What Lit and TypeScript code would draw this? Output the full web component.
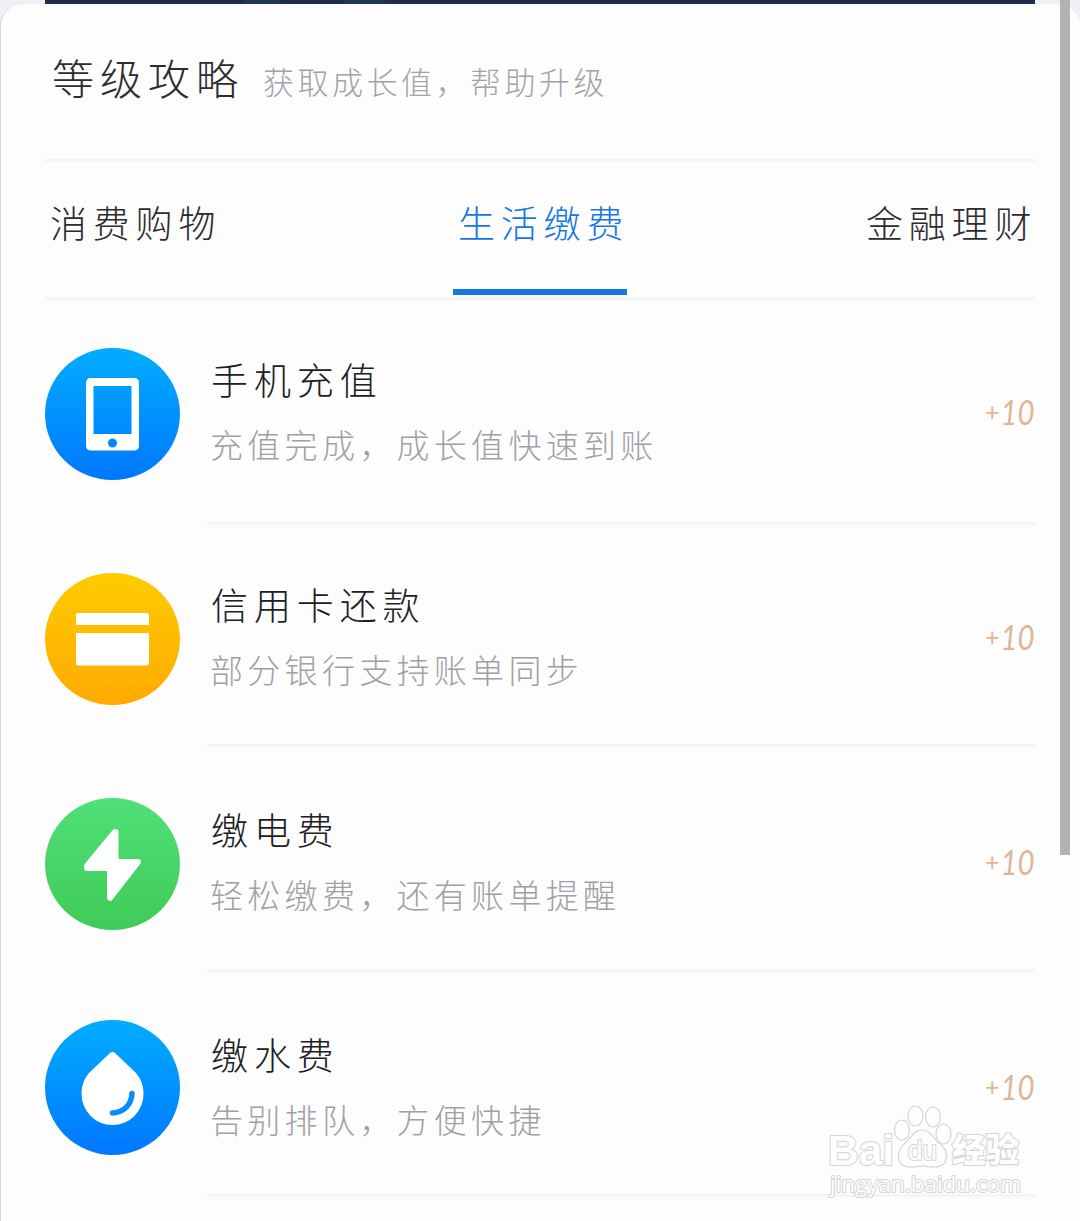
import { LitElement, html, css, svg } from "lit";
import { customElement, property, state } from "lit/decorators.js";

type IconName = "phone" | "card" | "bolt" | "drop";

interface Task {
  icon: IconName;
  title: string;
  desc: string;
  points: string;
}

const TASKS: Task[] = [
  { icon: "phone", title: "手机充值", desc: "充值完成，成长值快速到账", points: "10" },
  { icon: "card", title: "信用卡还款", desc: "部分银行支持账单同步", points: "10" },
  { icon: "bolt", title: "缴电费", desc: "轻松缴费，还有账单提醒", points: "10" },
  { icon: "drop", title: "缴水费", desc: "告别排队，方便快捷", points: "10" },
];

const GRADIENTS: Record<IconName, [string, string]> = {
  phone: ["#00adff", "#0077ff"],
  card: ["#ffcb00", "#ffaa00"],
  bolt: ["#50e078", "#40cb58"],
  drop: ["#00adff", "#0077ff"],
};

@customElement("task-icon")
export class TaskIcon extends LitElement {
  @property() name: IconName = "phone";

  static styles = css`
    :host { display: block; width: 135px; height: 132px; }
    :host([name="drop"]) { height: 135px; }
    .icon { display: block; width: 100%; height: 100%; }
  `;

  private glyph() {
    switch (this.name) {
      case "phone":
        return svg`
          <path fill="#fff" fill-rule="evenodd" d="M46 30H89Q94 30 94 35V97.500Q94 102.500 89 102.500H46Q41 102.500 41 97.500V35Q41 30 46 30ZM48.500 38V86H86.500V38ZM67.500 90.500A4.500 4.500 0 1 0 67.500 99.500A4.500 4.500 0 1 0 67.500 90.500Z"/>`;
      case "card":
        return svg`
          <path fill="#fff" d="M33 40H102Q104 40 104 42V52H31V42Q31 40 33 40ZM31 60H104V90.500Q104 92.500 102 92.500H33Q31 92.500 31 90.500Z"/>`;
      case "bolt":
        return svg`
          <path fill="#fff" stroke="#fff" stroke-width="6" stroke-linejoin="round" d="M70.500 34V64H93L65 100V70H42V68L70 34Z"/>`;
      default:
        return svg`
          <path fill="#fff" d="M64.800 33.200Q67.500 30.800 70.200 33.200L89 51C95 57 98.500 64 98.500 74A31 31 0 0 1 36.500 74C36.500 64 40 57 46 51Z"/>
          <path fill="none" stroke="#0a8cff" stroke-width="5.500" stroke-linecap="round" d="M87 73.500C86.500 84.500 79 92.500 67.500 93"/>`;
    }
  }

  render() {
    const [from, to] = GRADIENTS[this.name];
    const h = this.name === "drop" ? 135 : 132;
    return html`
      <svg class="icon" viewBox="0 0 135 ${h}" aria-hidden="true">
        <defs>
          <linearGradient id="g" x1="0" y1="0" x2="0" y2="1">
            <stop offset="0" stop-color=${from}></stop>
            <stop offset="1" stop-color=${to}></stop>
          </linearGradient>
        </defs>
        <ellipse cx="67.5" cy=${h / 2} rx="67.5" ry=${h / 2} fill="url(#g)"></ellipse>
        ${this.glyph()}
      </svg>
    `;
  }
}

@customElement("app-root")
export class AppRoot extends LitElement {
  @state() private active = 1;
  private tabs = ["消费购物", "生活缴费", "金融理财"];

  static styles = css`
    :host {
      display: block;
      position: relative;
      width: 1080px;
      height: 1221px;
      overflow: hidden;
      background: #f0eff4;
      font-family: "Noto Sans CJK SC", sans-serif;
      font-weight: 300;
      color: #2c2c30;
    }
    .banner {
      height: 4px;
      margin: 0 45px;
      background: linear-gradient(90deg, #212c4c 198px, #22345c 198px 236px, #202a4b 236px 300px, #22345c 300px 340px, #212b4a 340px);
    }
    .sheet {
      box-sizing: border-box;
      height: 1230px;
      padding: 0 44px;
      border-left: 1px solid #d5d5da;
      border-right: 1px solid #fdfdfe;
      border-radius: 22px 22px 0 0;
      background: #fdfdfe;
    }
    .head {
      display: flex;
      align-items: center;
      height: 158px;
      border-bottom: 3px solid #f5f5f8;
      white-space: nowrap;
      box-sizing: border-box;
      padding: 0 0 10px 7px;
    }
    .head-title { font-size: 42px; letter-spacing: 6px; line-height: 60px; }
    .head-sub { margin: 8px 0 0 19px; font-size: 31px; letter-spacing: 3.500px; line-height: 60px; color: #a3a3a6; }
    .tabs {
      display: flex;
      justify-content: space-between;
      height: 138px;
      box-sizing: border-box;
      border-bottom: 3px solid #f5f5f8;
    }
    .tab {
      width: 174px;
      height: 133px;
      box-sizing: border-box;
      padding: 30px 0 0 5px;
      border-bottom: 6px solid transparent;
      font-size: 37px;
      letter-spacing: 5.800px;
      line-height: 60px;
      white-space: nowrap;
    }
    .tab.active { color: #1478e6; border-bottom-color: #1478e6; }
    .row { display: flex; height: 225px; --shift: 0px; --icon-shift: 0px; }
    .row:nth-child(2) { height: 222px; }
    .row:nth-child(3) { --shift: 3px; --icon-shift: 3px; }
    .row:nth-child(4) { --shift: 3px; }
    .row-icon { flex: none; margin: calc(48px + var(--icon-shift)) 27px 0 0; }
    .row-body {
      flex: 1;
      display: flex;
      justify-content: space-between;
      box-sizing: border-box;
      padding-top: calc(49px + var(--shift));
      border-bottom: 3px solid #f5f5f8;
    }
    .row-title { padding-left: 4px; font-size: 37px; letter-spacing: 5.900px; line-height: 60px; color: #202024; }
    .row-desc { padding-left: 3px; margin-top: 5px; font-size: 33px; letter-spacing: 4.300px; line-height: 60px; color: #a1a1a4; }
    .points {
      display: flex;
      align-items: center;
      height: 60px;
      margin-top: 32px;
      font-family: Lato, "Liberation Sans", sans-serif;
      font-style: italic;
      font-weight: 400;
      font-size: 35px;
      color: #dfb695;
    }
    .plus { font-size: 25px; font-style: normal; margin-right: -5px; }
    .amount { transform: scaleX(0.84); transform-origin: right center; }
    .scrollbar { position: absolute; top: 0; left: 1060px; width: 10px; height: 855px; background: #b3b1b4; }
    .watermark { position: absolute; left: 820px; top: 1095px; width: 220px; height: 110px; }
    .wm-shape { fill: #fefefe; stroke: #d6d6d7; stroke-width: 1.200; }
    .wm-text { fill: #fefefe; stroke: #d6d6d8; stroke-width: 2.200; paint-order: stroke; stroke-linejoin: round; }
    .wm-latin { font: 700 43px "Liberation Sans", sans-serif; }
    .wm-du { font: 400 28px "Liberation Sans", sans-serif; }
    .wm-cn { font: 900 33px "Noto Sans CJK SC", sans-serif; }
    .wm-url { font: 400 22px "Open Sans", sans-serif; }
  `;

  render() {
    return html`
      <div class="banner"></div>
      <main class="sheet">
        <header class="head">
          <span class="head-title">等级攻略</span>
          <span class="head-sub">获取成长值，帮助升级</span>
        </header>
        <nav class="tabs">
          ${this.tabs.map(
            (t, i) => html`<div class="tab ${i === this.active ? "active" : ""}" @click=${() => (this.active = i)}>${t}</div>`
          )}
        </nav>
        <section class="list">
          ${TASKS.map(
            (t) => html`
              <div class="row">
                <task-icon class="row-icon" name=${t.icon}></task-icon>
                <div class="row-body">
                  <div>
                    <div class="row-title">${t.title}</div>
                    <div class="row-desc">${t.desc}</div>
                  </div>
                  <div class="points"><span class="plus">+</span><span class="amount">${t.points}</span></div>
                </div>
              </div>
            `
          )}
        </section>
      </main>
      <div class="scrollbar"></div>
      <svg class="watermark" viewBox="0 0 220 110">
        <text class="wm-text wm-latin" x="8" y="70" textLength="66" lengthAdjust="spacingAndGlyphs">Bai</text>
        <ellipse class="wm-shape" cx="82" cy="35" rx="7.500" ry="10"></ellipse>
        <ellipse class="wm-shape" cx="95.500" cy="21" rx="7.500" ry="10"></ellipse>
        <ellipse class="wm-shape" cx="113" cy="22" rx="7.500" ry="10"></ellipse>
        <ellipse class="wm-shape" cx="123.500" cy="39" rx="7.500" ry="10"></ellipse>
        <path class="wm-shape" d="M102 35C110 35 112 42 118 47C125 53 128 58 126 65C123 74 113 72 102 71C91 72 82 74 79 65C77 58 80 53 86 47C92 42 94 35 102 35Z"></path>
        <text class="wm-text wm-du" x="88" y="65" textLength="29" lengthAdjust="spacingAndGlyphs">du</text>
        <text class="wm-text wm-cn" x="132" y="67" textLength="67" lengthAdjust="spacingAndGlyphs">经验</text>
        <text class="wm-text wm-url" x="10" y="97" textLength="191" lengthAdjust="spacingAndGlyphs">jingyan.baidu.com</text>
      </svg>
    `;
  }
}
